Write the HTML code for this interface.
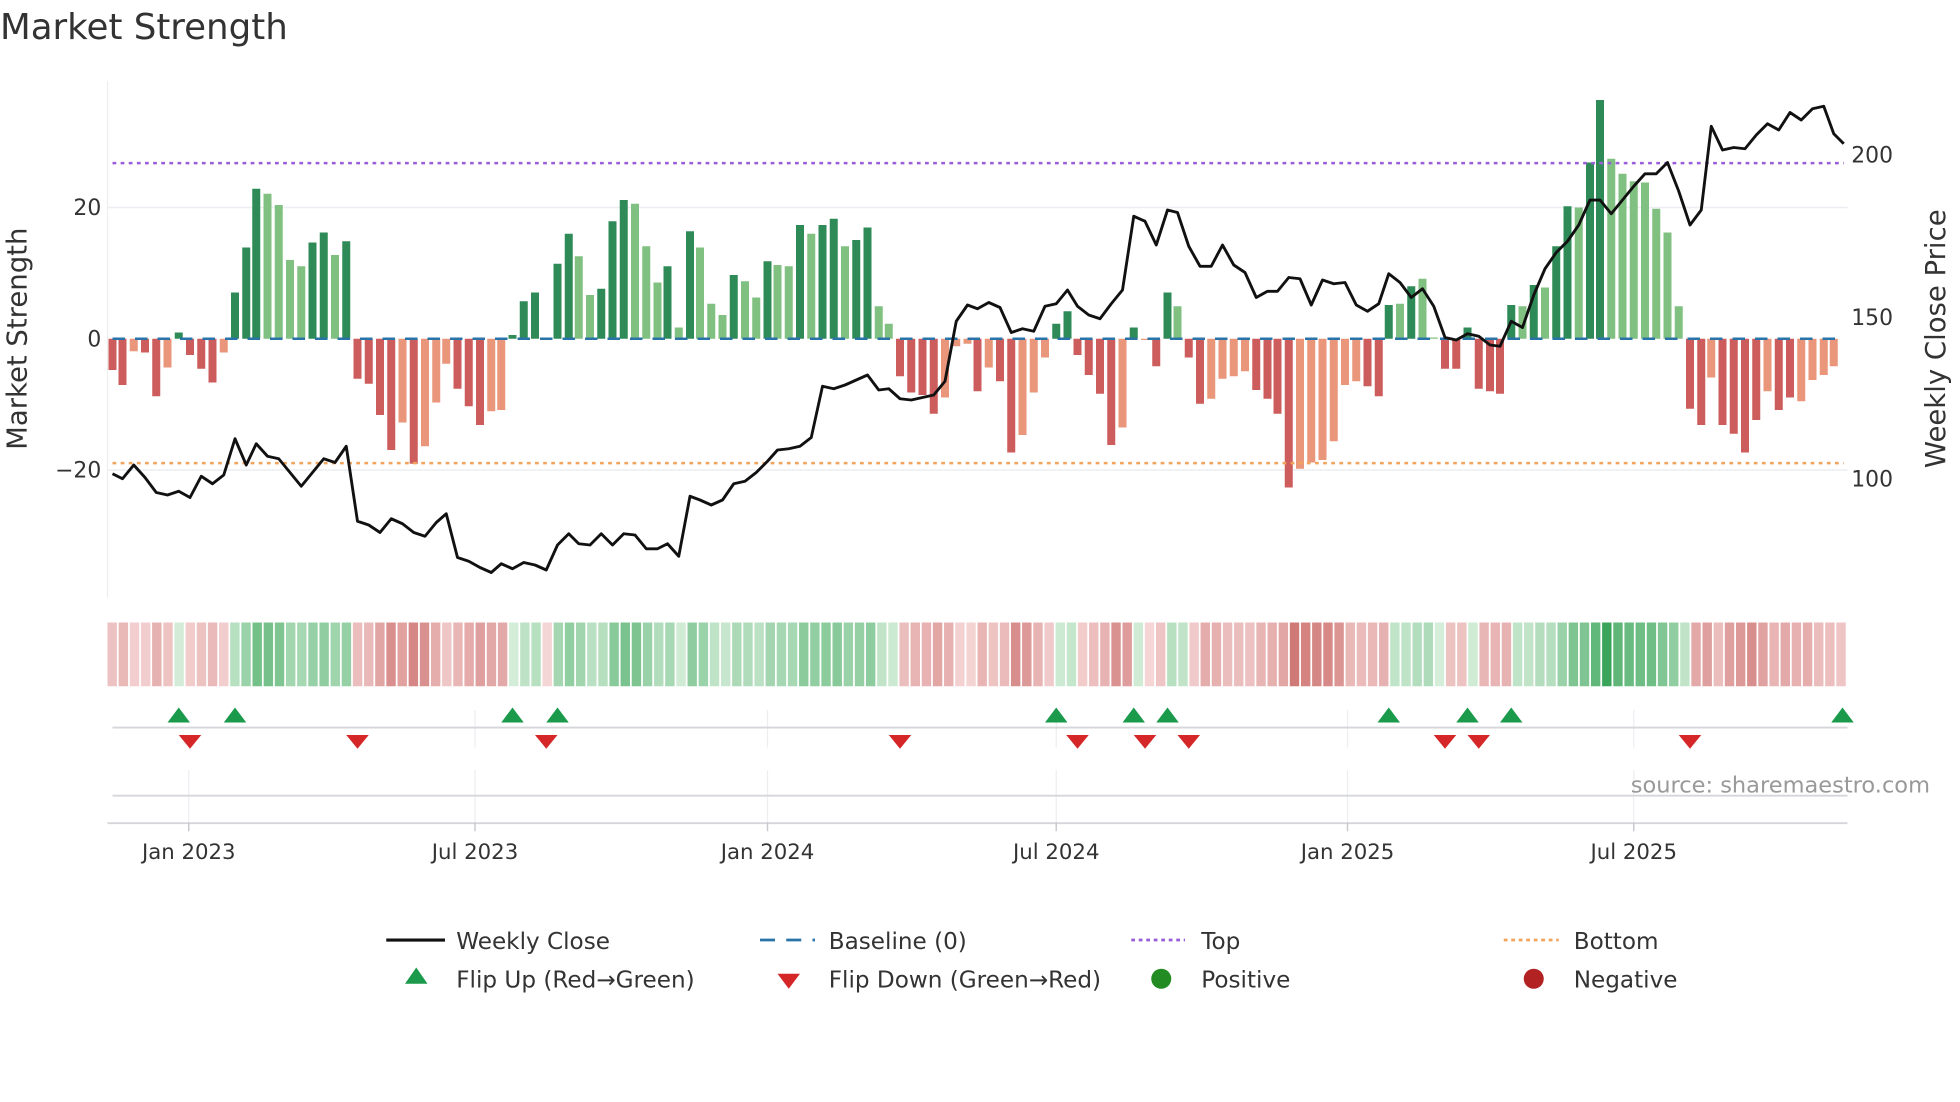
<!DOCTYPE html>
<html><head><meta charset="utf-8"><style>
html,body{margin:0;padding:0;background:#fff;}
svg{display:block;font-family:"DejaVu Sans","Liberation Sans",sans-serif;}
</style></head><body>
<svg id="s" width="1960" height="1102" viewBox="0 0 1568 881.6" xmlns="http://www.w3.org/2000/svg">
<rect width="1568" height="882" fill="#fff"/>
<text x="0" y="31" font-size="28.5" fill="#333">Market Strength</text>
<line x1="86" y1="65" x2="86" y2="478" stroke="#eee" stroke-width="1"/>
<line x1="86" y1="166" x2="1478" y2="166" stroke="#eceef2" stroke-width="1.2"/>
<line x1="86" y1="376" x2="1478" y2="376" stroke="#eceef2" stroke-width="1.2"/>
<g id="bars"></g>
<line x1="90" y1="271" x2="1475" y2="271" stroke="#2a73a8" stroke-width="2" stroke-dasharray="10,8"/>
<line x1="90" y1="130.5" x2="1475" y2="130.5" stroke="#9a5fd8" stroke-width="2" stroke-dasharray="3,3.5"/>
<line x1="90" y1="370.5" x2="1475" y2="370.5" stroke="#f2a35c" stroke-width="2" stroke-dasharray="3,3.5"/>
<polyline id="price" fill="none" stroke="#111" stroke-width="2.3" stroke-linejoin="round"/>
<g font-size="17.5" fill="#333">
<text x="81" y="172" text-anchor="end">20</text>
<text x="81" y="277" text-anchor="end">0</text>
<text x="81" y="382" text-anchor="end">−20</text>
<text x="1481" y="130">200</text>
<text x="1481" y="260">150</text>
<text x="1481" y="389">100</text>
</g>
<text transform="translate(21,271) rotate(-90)" text-anchor="middle" font-size="22" fill="#333">Market Strength</text>
<text transform="translate(1556,271) rotate(-90)" text-anchor="middle" font-size="22" fill="#333">Weekly Close Price</text>
<g id="heat"></g>
<g stroke="#eceef2" stroke-width="1">
<line x1="380" y1="568" x2="380" y2="598"/><line x1="614" y1="568" x2="614" y2="598"/><line x1="845" y1="568" x2="845" y2="598"/><line x1="1078" y1="568" x2="1078" y2="598"/><line x1="1307" y1="568" x2="1307" y2="598"/>
<line x1="151" y1="616" x2="151" y2="658"/><line x1="380" y1="616" x2="380" y2="658"/><line x1="614" y1="616" x2="614" y2="658"/><line x1="845" y1="616" x2="845" y2="658"/><line x1="1078" y1="616" x2="1078" y2="658"/><line x1="1307" y1="616" x2="1307" y2="658"/>
</g>
<line x1="90" y1="582" x2="1478" y2="582" stroke="#d4d6da" stroke-width="1.5"/>
<line x1="90" y1="636.5" x2="1478" y2="636.5" stroke="#d4d6da" stroke-width="1.5"/>
<line x1="86" y1="658.5" x2="1478" y2="658.5" stroke="#d4d6da" stroke-width="1.5"/>
<g stroke="#c8cacf" stroke-width="1.2">
<line x1="151" y1="658" x2="151" y2="665"/><line x1="380" y1="658" x2="380" y2="665"/><line x1="614" y1="658" x2="614" y2="665"/><line x1="845" y1="658" x2="845" y2="665"/><line x1="1078" y1="658" x2="1078" y2="665"/><line x1="1307" y1="658" x2="1307" y2="665"/>
</g>
<g id="flips"></g>
<text x="1544" y="634" text-anchor="end" font-size="18" fill="#999">source: sharemaestro.com</text>
<g font-size="17" fill="#333" text-anchor="middle">
<text x="151" y="687">Jan 2023</text><text x="380" y="687">Jul 2023</text><text x="614" y="687">Jan 2024</text><text x="845" y="687">Jul 2024</text><text x="1078" y="687">Jan 2025</text><text x="1307" y="687">Jul 2025</text>
</g>
<g font-size="18.5" fill="#333">
<line x1="309" y1="752" x2="356" y2="752" stroke="#111" stroke-width="2.5"/>
<text x="365" y="759">Weekly Close</text>
<line x1="608" y1="752" x2="652" y2="752" stroke="#2a73a8" stroke-width="2.2" stroke-dasharray="12,9"/>
<text x="663" y="759">Baseline (0)</text>
<line x1="905" y1="752" x2="948" y2="752" stroke="#9a5fd8" stroke-width="2.2" stroke-dasharray="3,3"/>
<text x="961" y="759">Top</text>
<line x1="1203" y1="752" x2="1247" y2="752" stroke="#f2a35c" stroke-width="2.2" stroke-dasharray="3,3"/>
<text x="1259" y="759">Bottom</text>
<polygon points="333,774 324,787 342,787" fill="#1a9a4a"/>
<text x="365" y="790">Flip Up (Red→Green)</text>
<polygon points="622,779 640,779 631,791" fill="#d62728"/>
<text x="663" y="790">Flip Down (Green→Red)</text>
<circle cx="929" cy="783" r="8" fill="#228b22"/>
<text x="961" y="790">Positive</text>
<circle cx="1227" cy="783" r="8" fill="#b22222"/>
<text x="1259" y="790">Negative</text>
</g>
</svg>
<script>
var NS="http://www.w3.org/2000/svg";
var d="90:296R,98:308R,107:281r,116:282R,125:317R,134:294r,143:266G,152:284R,161:295R,170:306R,179:282r,188:234G,197:198G,205:151G,214:155g,223:164g,232:208g,241:213g,250:194G,259:186G,268:204g,277:193G,286:303R,295:307R,304:332R,313:360R,322:338r,331:371R,340:357r,349:322r,357:291r,366:311R,375:325R,384:340R,393:329r,401:328r,410:268G,419:241G,428:234G,437:271r,446:211G,455:187G,463:205g,472:236g,481:231G,490:177G,499:160G,508:163g,517:197g,526:226g,534:213G,543:262g,552:185G,560:198g,569:243g,578:252g,587:220G,596:225g,605:238g,614:209G,622:212g,631:213g,640:180G,649:187g,658:180G,667:175G,676:197g,685:192G,694:182G,703:245g,711:259g,720:301R,729:314R,738:316R,747:331R,756:318r,765:277r,774:275r,782:313R,791:294r,800:305R,809:362R,818:348r,827:314r,836:286r,845:259G,854:249G,862:284R,871:300R,880:315R,889:356R,898:342r,907:262G,916:272r,925:293R,934:234G,942:245g,951:286R,960:323R,969:319r,978:303r,987:301r,996:297r,1005:312R,1014:319R,1022:331R,1031:390R,1040:375r,1049:370r,1058:368r,1067:353r,1076:308r,1085:305r,1094:309R,1103:317R,1111:244G,1120:243g,1129:229G,1138:223g,1147:270g,1156:295R,1165:295R,1174:262G,1183:311R,1192:313R,1200:315R,1209:244G,1218:245g,1227:228G,1236:230g,1245:197G,1254:165G,1263:166g,1272:130G,1280:80G,1289:127g,1298:139g,1307:145g,1316:146g,1325:167g,1334:186g,1343:245g,1352:327R,1361:340R,1369:302r,1378:340R,1387:347R,1396:362R,1405:336R,1414:313r,1423:328R,1432:318R,1441:321r,1450:304r,1459:300r,1467:293r";
var col={G:"#2e8b57",g:"#80c080",R:"#cd5c5c",r:"#e9967a"};
var bars=document.getElementById("bars"),heat=document.getElementById("heat");
function mix(a,b,t){return "rgb("+[0,1,2].map(function(i){return Math.round(a[i]+(b[i]-a[i])*t)}).join(",")+")";}
var items=d.split(","),N=items.length,cw=1392/N;
items.forEach(function(p,i){
 var a=p.split(":"),x=+a[0],y=parseFloat(a[1]),t=a[1].slice(-1);
 var r=document.createElementNS(NS,"rect");
 var top=Math.min(y,271),h=Math.abs(y-271);
 r.setAttribute("x",x-3.2);r.setAttribute("width",6.4);r.setAttribute("y",top);r.setAttribute("height",Math.max(h,0.5));r.setAttribute("fill",col[t]);bars.appendChild(r);
 var v=Math.abs(271-y)/5.25,k=Math.min(1,v/36),c;
 if(t=="G"||t=="g")c=mix([214,238,218],[58,165,90],k);else c=mix([245,214,214],[208,122,120],Math.min(1,v/22));
 var h2=document.createElementNS(NS,"rect");
 h2.setAttribute("x",86+i*cw);h2.setAttribute("width",cw-1.4);h2.setAttribute("y",498);h2.setAttribute("height",51);h2.setAttribute("fill",c);heat.appendChild(h2);
});
var pts="90,379 98,383 107,372 116,382 125,394 134,396 143,393 152,398 161,381 170,387 179,380 188,351 197,372 205,355 214,365 223,367 232,378 241,389 250,378 259,367 268,370 277,357 286,417 295,420 304,426 313,415 322,419 331,426 340,429 349,418 357,411 366,446 375,449 384,454 393,458 401,451 410,455 419,450 428,452 437,456 446,436 455,427 463,435 472,436 481,427 490,436 499,427 508,428 517,439 526,439 534,435 543,445 552,397 560,400 569,404 578,400 587,387 596,385 605,378 614,369 622,360 631,359 640,357 649,350 658,309 667,311 676,308 685,304 694,300 703,312 711,311 720,319 729,320 738,318 747,316 756,305 765,257 774,244 782,247 791,242 800,246 809,266 818,263 827,265 836,245 845,243 854,232 862,245 871,252 880,255 889,243 898,232 907,173 916,177 925,196 934,168 942,170 951,197 960,213 969,213 978,196 987,212 996,218 1005,238 1014,233 1022,233 1031,222 1040,223 1049,244 1058,224 1067,227 1076,226 1085,244 1094,249 1103,243 1111,219 1120,226 1129,238 1138,231 1147,245 1156,270 1165,272 1174,267 1183,269 1192,276 1200,277 1209,257 1218,262 1227,236 1236,215 1245,202 1254,193 1263,180 1272,160 1280,160 1289,171 1298,160 1307,149 1316,139 1325,139 1334,130 1343,153 1352,180 1361,168 1369,101 1378,120 1387,118 1396,119 1405,108 1414,99 1423,104 1432,90 1441,96 1450,87 1459,85 1467,107 1475,115";
document.getElementById("price").setAttribute("points",pts);
var fl=document.getElementById("flips");
[143,188,410,446,845,907,934,1111,1174,1209,1474].forEach(function(x){var p=document.createElementNS(NS,"polygon");p.setAttribute("points",x+",566 "+(x-9)+",578 "+(x+9)+",578");p.setAttribute("fill","#1a9a4a");fl.appendChild(p);});
[152,286,437,720,862,916,951,1156,1183,1352].forEach(function(x){var p=document.createElementNS(NS,"polygon");p.setAttribute("points",(x-9)+",588 "+(x+9)+",588 "+x+",599");p.setAttribute("fill","#d62728");fl.appendChild(p);});
</script>
</body></html>
